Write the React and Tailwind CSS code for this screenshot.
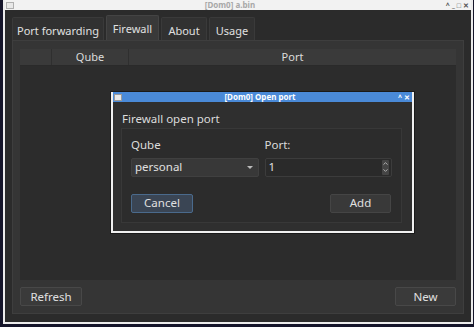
import { ChevronUp, ChevronDown } from 'lucide-react'

const font = { fontFamily: '"Noto Sans", "Open Sans", sans-serif' }

function Btn({ children, className = '' }) {
  return (
    <div className={`h-[19px] flex items-center justify-center rounded-[2px] border text-[11.5px] text-[#e0e0e0] ${className}`}>
      {children}
    </div>
  )
}

function OpenPortDialog() {
  return (
    <div className="absolute left-[111px] top-[92px] w-[303px] h-[141px] bg-[#2f2f2f] border-2 border-t-0 border-[#f0f0f0] shadow-[0_0_0_1px_#1a1a1a] flex flex-col">
      <div className="h-[10px] bg-[#4a8ad8] flex items-center relative">
        <div className="w-[8px] h-[7px] ml-[1px] bg-[#e8e8e8] border border-[#9a9a9a]" />
        <div className="flex-1 text-center text-[8px] leading-none font-bold text-white">[Dom0] Open port</div>
        <div className="flex items-center gap-[2px] mr-[2px] text-white text-[7px] leading-none font-bold">
          <span>^</span>
          <span>✕</span>
        </div>
      </div>
      <div className="px-[8px] pt-[11px] flex-1 flex flex-col">
        <div className="text-[11.5px] leading-none text-[#dcdcdc] ml-[1px]">Firewall open port</div>
        <div className="mt-[3px] mr-[2px] h-[95px] border border-[#383838] bg-[#2c2c2c] px-[9px] pt-[10px]">
          <div className="flex gap-[6px]">
            <div className="w-[129px]">
              <div className="text-[11.5px] leading-none text-[#dcdcdc] h-[14px]">Qube</div>
              <div className="mt-[5px] h-[19px] bg-[#383838] border border-[#404040] rounded-[2px] flex items-center justify-between pl-[3px] pr-[5px] text-[11.5px] text-[#e0e0e0]">
                <span>personal</span>
                <span className="w-0 h-0 border-x-[3px] border-x-transparent border-t-[3px] border-t-[#bbbbbb]" />
              </div>
            </div>
            <div className="w-[129px]">
              <div className="text-[11.5px] leading-none text-[#dcdcdc] h-[14px]">Port:</div>
              <div className="mt-[5px] h-[19px] bg-[#2a2a2a] border border-[#3c3c3c] rounded-[2px] flex items-center justify-between pl-[3px] pr-[2px] text-[11.5px] text-[#e0e0e0]">
                <span>1</span>
                <div className="w-[7px] h-[15px] bg-[#454545] rounded-[1px] flex flex-col items-center justify-center text-[#bbbbbb]">
                  <ChevronUp size={7} strokeWidth={3} />
                  <ChevronDown size={7} strokeWidth={3} />
                </div>
              </div>
            </div>
          </div>
          <div className="mt-[17px] flex justify-between">
            <Btn className="w-[62px] bg-[#3a4554] border-[#4a6a8c]">Cancel</Btn>
            <Btn className="w-[61px] mr-[1px] bg-[#393939] border-[#454545]">Add</Btn>
          </div>
        </div>
      </div>
    </div>
  )
}

export default function App() {
  const tabs = [
    ['Port forwarding', 'w-[92px]'],
    ['Firewall', 'w-[53px]'],
    ['About', 'w-[46px]'],
    ['Usage', 'w-[46px]'],
  ]
  return (
    <div className="w-[474px] h-[327px] bg-[#15152a] relative overflow-hidden" style={font}>
      <div className="ml-[3px] w-[470px] h-[324px] flex flex-col border-x-2 border-b-2 border-[#ececec]">
        <div className="h-[10px] bg-[#f2f2f2] flex items-center relative">
          <div className="w-[8px] h-[7px] ml-[1px] bg-[#e8e8e8] border border-[#b0b0b0]" />
          <div className="flex-1 text-center text-[8px] leading-none font-bold text-[#a8a8a8]">[Dom0] a.bin</div>
          <div className="flex items-center gap-[2px] mr-[2px] text-[#555] text-[7px] leading-none font-bold">
            <span>^</span>
            <span>_</span>
            <span>□</span>
            <span>✕</span>
          </div>
        </div>
        <div className="flex-1 bg-[#2b2b2b] px-[7px] pt-[5px] pb-[8px] flex flex-col">
          <div className="flex items-end h-[25px] gap-[2px]">
            {tabs.map(([t, w]) => {
              const active = t === 'Firewall'
              return (
                <div
                  key={t}
                  className={`${w} whitespace-nowrap flex items-center justify-center text-[11px] text-[#e0e0e0] border border-b-0 rounded-t-[2px] ${
                    active ? 'h-[25px] bg-[#393939] border-[#444] pt-[2px]' : 'h-[23px] bg-[#313131] border-[#3a3a3a] pt-[4px]'
                  }`}
                >
                  {t}
                </div>
              )
            })}
          </div>
          <div className="flex-1 bg-[#353535] border border-[#3e3e3e] px-[7px] pt-[8px] pb-[7px] flex flex-col">
            <div className="flex-1 bg-[#2c2c2c] flex flex-col">
              <div className="h-[17px] bg-[#3a3a3a] flex text-[11px] text-[#dcdcdc] border-b border-[#2a2a2a]">
                <div className="w-[32px] border-r border-[#2f2f2f]" />
                <div className="w-[77px] border-r border-[#2f2f2f] flex items-center justify-center">Qube</div>
                <div className="flex-1 flex items-center justify-center">Port</div>
              </div>
            </div>
            <div className="mt-[7px] flex justify-between">
              <Btn className="w-[62px] bg-[#3a3a3a] border-[#484848]">Refresh</Btn>
              <Btn className="w-[61px] bg-[#3a3a3a] border-[#484848]">New</Btn>
            </div>
          </div>
        </div>
      </div>
      <OpenPortDialog />
    </div>
  )
}
